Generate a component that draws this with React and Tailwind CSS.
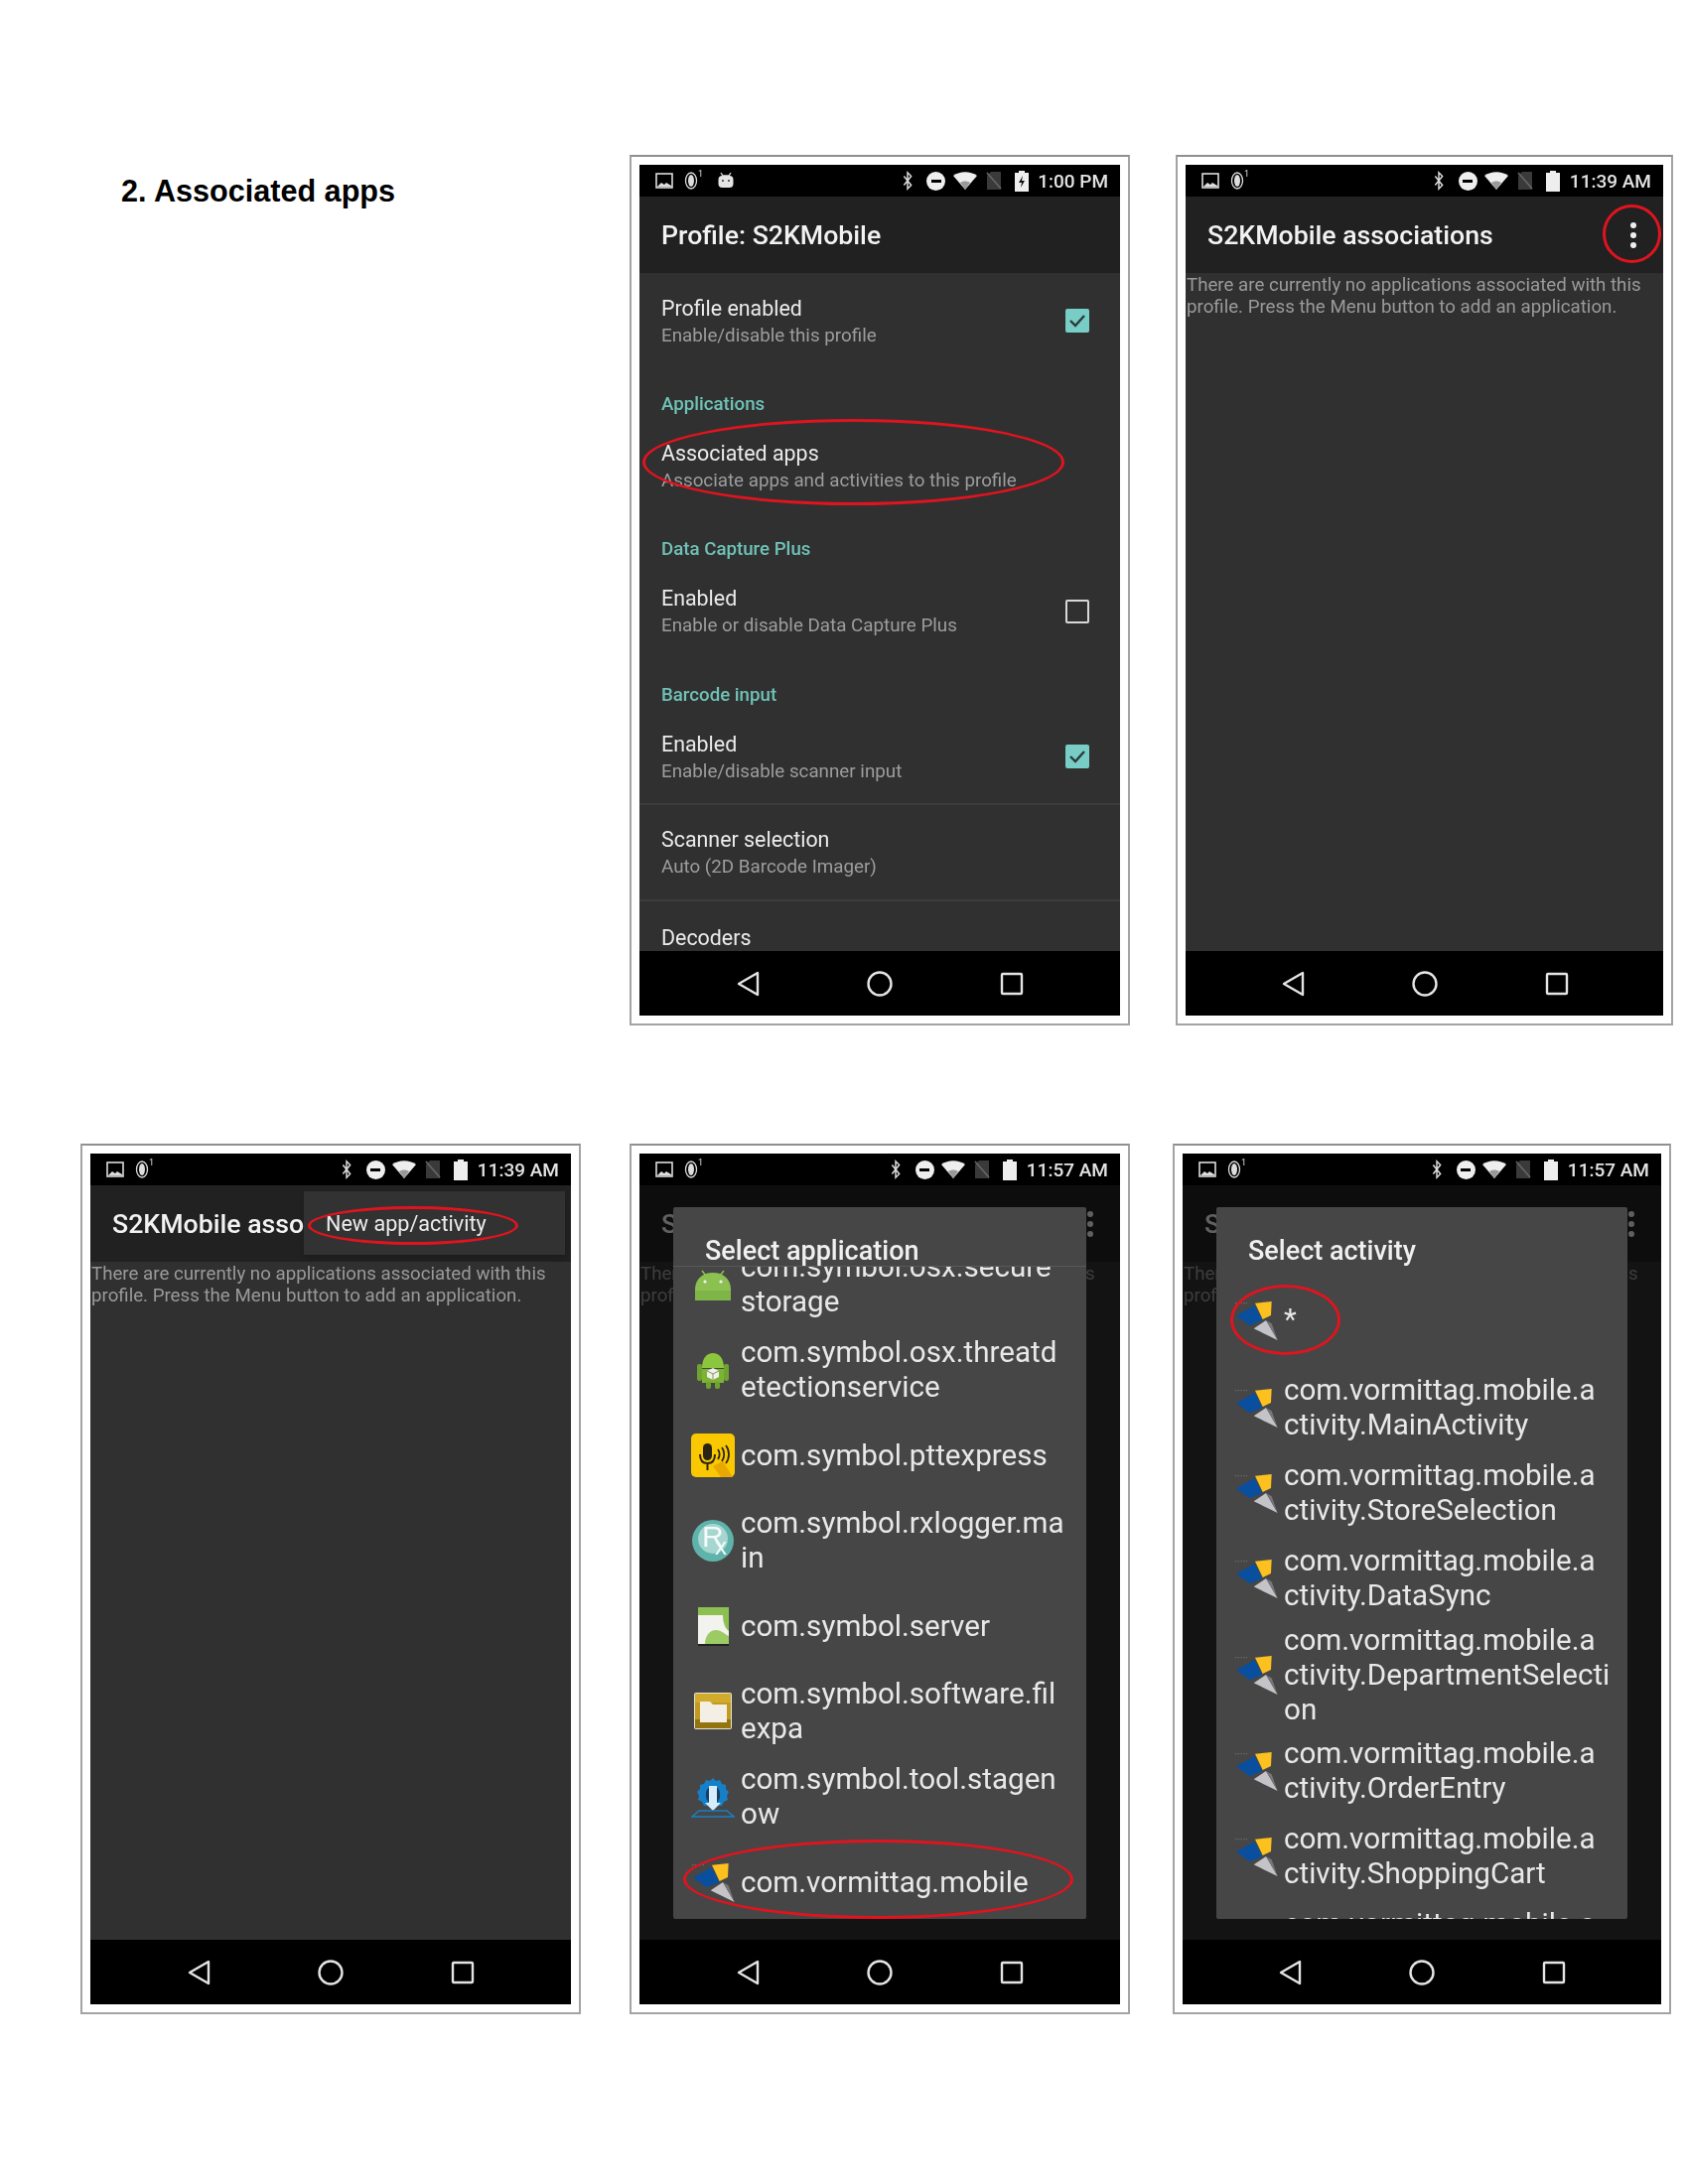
const PROFILE_ROWS = [
  { category: "Applications", title: "Associated apps", sub: "Associate apps and activities to this profile" },
  { category: "Data Capture Plus", title: "Enabled", sub: "Enable or disable Data Capture Plus", check: false },
  { category: "Barcode input", title: "Enabled", sub: "Enable/disable scanner input", check: true },
];

const APPS = [
  { icon: AndroidHead, lines: ["com.symbol.osx.secure", "storage"] },
  { icon: AndroidRobot, lines: ["com.symbol.osx.threatd", "etectionservice"] },
  { icon: PttIcon, lines: ["com.symbol.pttexpress"] },
  { icon: RxIcon, lines: ["com.symbol.rxlogger.ma", "in"] },
  { icon: ServerIcon, lines: ["com.symbol.server"] },
  { icon: FolderIcon, lines: ["com.symbol.software.fil", "expa"] },
  { icon: StageIcon, lines: ["com.symbol.tool.stagen", "ow"] },
  { icon: VormittagIcon, lines: ["com.vormittag.mobile"] },
];

const ACTIVITIES = [
  { lines: ["*"], height: "h-[91px]" },
  { lines: ["com.vormittag.mobile.a", "ctivity.MainActivity"], height: "h-[86px]" },
  { lines: ["com.vormittag.mobile.a", "ctivity.StoreSelection"], height: "h-[86px]" },
  { lines: ["com.vormittag.mobile.a", "ctivity.DataSync"], height: "h-[86px]" },
  { lines: ["com.vormittag.mobile.a", "ctivity.DepartmentSelecti", "on"], height: "h-[108px]" },
  { lines: ["com.vormittag.mobile.a", "ctivity.OrderEntry"], height: "h-[86px]" },
  { lines: ["com.vormittag.mobile.a", "ctivity.ShoppingCart"], height: "h-[86px]" },
  { lines: ["com.vormittag.mobile.a", "ctivity.Login"], height: "h-[86px]" },
];

function AndroidHead() {
  return (
    <svg viewBox="0 0 44 44" className="w-[44px] h-[44px]">
      <path d="M11 8l4 5M33 8l-4 5" stroke="#8bc34a" strokeWidth="1.5" />
      <path d="M4 38V27C4 16 12 10 22 10s18 6 18 17v11z" fill="#8cc152" />
      <rect x="4" y="28" width="36" height="10" fill="#7fb548" />
      <circle cx="14" cy="19" r="1.6" fill="#f2f2f2" />
      <circle cx="30" cy="19" r="1.6" fill="#f2f2f2" />
    </svg>
  );
}

function AndroidRobot() {
  return (
    <svg viewBox="0 0 44 44" className="w-[44px] h-[44px]">
      <path d="M11 20C11 10 16 5 22 5s11 5 11 15z" fill="#8cc63f" />
      <rect x="6" y="16" width="5" height="17" rx="2" fill="#6ea32f" />
      <rect x="33" y="16" width="5" height="17" rx="2" fill="#6ea32f" />
      <rect x="11" y="21" width="22" height="14" fill="#7cb335" />
      <rect x="15" y="34" width="5" height="7" rx="2" fill="#6ea32f" />
      <rect x="24" y="34" width="5" height="7" rx="2" fill="#6ea32f" />
      <path d="M22 20l6 3v6l-6 3-6-3v-6z" fill="#f0f0e8" />
      <path d="M22 26v6M16 23l6 3 6-3" stroke="#7d9a5a" strokeWidth="1" fill="none" />
    </svg>
  );
}

function PttIcon() {
  return (
    <svg viewBox="0 0 44 44" className="w-[44px] h-[44px]">
      <rect width="44" height="44" rx="5" fill="#fac800" />
      <path d="M22 33l8 11h12l-10-16z" fill="#e8a800" />
      <rect x="12" y="10" width="9" height="17" rx="4.5" fill="#2b2413" />
      <path d="M9 21c0 6 3 9 7.5 9s7.5-3 7.5-9M16.500 30v7" stroke="#2b2413" strokeWidth="2" fill="none" />
      <path d="M27 16c2 3 2 7 0 10M31 14c3 4 3 10 0 14M35 12c4 5 4 13 0 18" stroke="#2b2413" strokeWidth="1.8" fill="none" />
    </svg>
  );
}

function RxIcon() {
  return (
    <svg viewBox="0 0 44 44" className="w-[44px] h-[44px]">
      <circle cx="22" cy="22" r="21" fill="#5fb3ab" />
      <circle cx="22" cy="20" r="15" fill="#a6d6d0" />
      <text x="11" y="28" fontSize="30" fill="#f4fbfa" fontFamily="Liberation Sans">R</text>
      <text x="24" y="36" fontSize="24" fill="#f4fbfa" fontFamily="Liberation Sans">x</text>
    </svg>
  );
}

function ServerIcon() {
  return (
    <svg viewBox="0 0 44 44" className="w-[44px] h-[44px]">
      <rect x="7" y="3" width="31" height="37" fill="#f2f2ee" />
      <rect x="7" y="3" width="31" height="8" fill="#8cc152" />
      <path d="M14 40c0-8 5-14 11-14s10 5 13 6v8z" fill="#9ccb63" />
      <path d="M32 11h6v16c-4-3-6-9-6-16z" fill="#8cc152" />
      <rect x="7" y="40" width="31" height="2" fill="#222" />
    </svg>
  );
}

function FolderIcon() {
  return (
    <svg viewBox="0 0 44 44" className="w-[44px] h-[44px]">
      <rect x="3" y="3" width="38" height="37" rx="2" fill="#e8e4d4" />
      <rect x="4" y="4" width="36" height="9" fill="#d2ab2c" />
      <rect x="4" y="13" width="36" height="17" fill="#c39a1f" />
      <rect x="4" y="30" width="36" height="9" fill="#94740f" />
      <path d="M9 12h10l3 3h14v18H9z" fill="#f3efe4" />
    </svg>
  );
}

function StageIcon() {
  return (
    <svg viewBox="0 0 44 44" className="w-[44px] h-[44px]">
      <path d="M22 3l3 3 4-1 2 4 4 1v4l3 3-2 4 1 4-4 2-2 4H13l-2-4-4-2 1-4-2-4 3-3V10l4-1 2-4 4 1z" fill="#1580c8" />
      <rect x="15" y="12" width="14" height="16" rx="6" fill="#173f66" />
      <path d="M18 11h8v17h4l-8 8-8-8h4z" fill="#d5ecfa" />
      <path d="M1 42l7-6h28l7 6z" fill="none" stroke="#1a7fc2" strokeWidth="1.6" />
    </svg>
  );
}

function VormittagIcon() {
  return (
    <svg viewBox="0 0 130 120" className="w-[44px] h-[40px]">
      <path d="M2 8h36" stroke="#6a6a6a" strokeWidth="4" strokeDasharray="4 4" />
      <path d="M5 46L60 15l25 45-40 16z" fill="#0a4f9e" />
      <path d="M62 8l50-5-2 42-25 12z" fill="#fcc11f" />
      <path d="M58 85l37-25 35 60z" fill="#c4c4c8" />
      <path d="M95 60l17 10 18 50z" fill="#77777b" />
    </svg>
  );
}

function StatusBar({ time, robot }) {
  return (
    <div className="h-[32px] bg-black flex items-center pl-[16px] pr-[12px] shrink-0">
      <svg viewBox="0 0 18 16" className="w-[18px] h-[16px]">
        <rect x="1" y="1" width="16" height="14" fill="none" stroke="#ddd" strokeWidth="1.6" />
        <path d="M2 14l4-4 3 2 2-2 5 3v1z" fill="#ddd" />
      </svg>
      <svg viewBox="0 0 14 20" className="w-[14px] h-[20px] ml-[11px]">
        <ellipse cx="7" cy="10" rx="5.500" ry="8" fill="none" stroke="#ddd" strokeWidth="1.300" />
        <ellipse cx="7" cy="10" rx="3" ry="6" fill="#ddd" />
      </svg>
      <span className="text-[9px] leading-none text-[#ddd] mb-[14px]">1</span>
      {robot && (
        <svg viewBox="0 0 18 18" className="w-[18px] h-[18px] ml-[14px]">
          <path d="M4 1l2 3h6l2-3" stroke="#ddd" strokeWidth="1.300" fill="none" />
          <rect x="1.500" y="4" width="15" height="12" rx="4" fill="#e4e4e4" />
          <circle cx="6" cy="9" r="1" fill="#333" />
          <circle cx="12" cy="9" r="1" fill="#333" />
        </svg>
      )}
      <div className="ml-auto flex items-center">
        <div className="w-[29px] flex justify-center">
          <svg viewBox="0 0 14 22" className="w-[14px] h-[20px]">
            <path d="M3 6l8 10-4 4V2l4 4-8 10" fill="none" stroke="#ddd" strokeWidth="1.600" />
          </svg>
        </div>
        <div className="w-[29px] flex justify-center">
          <div className="w-[19px] h-[19px] rounded-full bg-[#eee] flex items-center justify-center">
            <div className="w-[10px] h-[3px] bg-black" />
          </div>
        </div>
        <div className="w-[29px] flex justify-center">
          <svg viewBox="0 0 24 18" className="w-[24px] h-[18px]">
            <path d="M0 4c7-5 17-5 24 0L12 18z" fill="#eee" />
            <path d="M7 11c3-2 7-2 10 0l-5 7z" fill="#999" />
          </svg>
        </div>
        <div className="w-[29px] flex justify-center">
          <svg viewBox="0 0 16 20" className="w-[16px] h-[20px]">
            <path d="M5 1h10v18H1V5z" fill="#3a3a3a" />
            <path d="M1 2l14 16" stroke="#666" strokeWidth="1.600" />
          </svg>
        </div>
        <div className="w-[27px] flex justify-center">
          <svg viewBox="0 0 14 21" className="w-[14px] h-[21px]">
            <path d="M4 2V0h6v2h4v19H0V2z" fill="#eee" />
            {robot && <path d="M8 5l-4 7h3l-1 5 4-7H7z" fill="#111" />}
          </svg>
        </div>
        <span className="ml-[3px] pt-[2px] text-[19px] font-medium text-[#e4e4e4]">{time}</span>
      </div>
    </div>
  );
}

function NavBar() {
  return (
    <div className="h-[65px] bg-black flex items-center justify-center gap-[107px] shrink-0">
      <svg viewBox="0 0 26 26" className="w-[26px] h-[26px]">
        <path d="M23 2v22L4 13z" fill="none" stroke="#e4e4e4" strokeWidth="2.400" strokeLinejoin="round" />
      </svg>
      <svg viewBox="0 0 26 26" className="w-[26px] h-[26px]">
        <circle cx="13" cy="13" r="11.500" fill="none" stroke="#e4e4e4" strokeWidth="2.400" />
      </svg>
      <svg viewBox="0 0 26 26" className="w-[26px] h-[26px]">
        <rect x="3" y="3" width="20" height="20" rx="1" fill="none" stroke="#e4e4e4" strokeWidth="2.400" />
      </svg>
    </div>
  );
}

// red marker drawn over the screenshots
function Ring({ className }) {
  return <div className={`absolute rounded-[50%] border-[3px] border-[#e0141f] ${className}`} />;
}

function Phone({ width, time, robot, children }) {
  return (
    <div className="border-2 border-[#a3a3a3] border-t-[#8f8f8f] bg-white p-2 shrink-0">
      <div className={`relative h-[857px] flex flex-col overflow-hidden bg-[#303030] blur-[0.4px] ${width}`}>
        <StatusBar time={time} robot={robot} />
        <div className="flex-1 min-h-0 flex flex-col overflow-hidden">{children}</div>
        <NavBar />
      </div>
    </div>
  );
}

function Checkbox({ on }) {
  if (on) {
    return (
      <div className="w-[24px] h-[24px] rounded-[2px] bg-[#78cdc6] flex items-center justify-center -mt-[2px]">
        <svg viewBox="0 0 24 24" className="w-[24px] h-[24px]">
          <path d="M5 12l5 5 9-10" fill="none" stroke="#2c3a3a" strokeWidth="2.400" />
        </svg>
      </div>
    );
  }
  return <div className="w-[24px] h-[24px] rounded-[2px] border-2 border-[#d8d8d8] -mt-[2px]" />;
}

function SettingRow({ title, sub, check }) {
  return (
    <div className="h-[76px] pl-[22px] pr-[31px] pt-[2px] flex items-center justify-between shrink-0">
      <div>
        <div className="text-[21.400px] leading-[27px] text-[#ebebeb]">{title}</div>
        <div className="text-[18.800px] leading-[28px] text-[#9d9d9d]">{sub}</div>
      </div>
      {check !== undefined && <Checkbox on={check} />}
    </div>
  );
}

function ProfileScreen() {
  return (
    <>
      <div className="h-[77px] bg-[#212121] pl-[22px] pt-[1px] flex items-center shrink-0">
        <span className="text-[26.700px] font-medium text-[#f2f2f2]">Profile: S2KMobile</span>
      </div>
      <div className="mt-[10px]">
        <SettingRow title="Profile enabled" sub="Enable/disable this profile" check={true} />
      </div>
      {PROFILE_ROWS.map((row) => (
        <div key={row.category} className="pt-[20.400px]">
          <div className="h-[50px] pl-[22px] pt-[1px] flex items-center text-[18.700px] font-medium text-[#6fc2b7]">
            {row.category}
          </div>
          <SettingRow title={row.title} sub={row.sub} check={row.check} />
        </div>
      ))}
      <div className="mt-[9px] h-[101px] border-t-2 border-b-2 border-[#3c3c3c] flex items-center">
        <SettingRow title="Scanner selection" sub="Auto (2D Barcode Imager)" />
      </div>
      <div className="pl-[22px] pt-[23px] text-[21.400px] leading-[27px] text-[#ebebeb]">Decoders</div>
    </>
  );
}

function AssociationsScreen({ title = "S2KMobile associations", dots = true }) {
  return (
    <>
      <div className="h-[77px] bg-[#212121] pl-[22px] pr-[27px] pt-[1px] flex items-center justify-between shrink-0">
        <span className="text-[26.700px] font-medium text-[#f2f2f2]">{title}</span>
        {dots && (
          <div className="flex flex-col gap-[4px]">
            <div className="w-[6px] h-[6px] rounded-full bg-[#eee]" />
            <div className="w-[6px] h-[6px] rounded-full bg-[#eee]" />
            <div className="w-[6px] h-[6px] rounded-full bg-[#eee]" />
          </div>
        )}
      </div>
      <div className="pl-[1px] pt-[1px] text-[18.700px] leading-[22px] text-[#9a9a9a] whitespace-nowrap">
        There are currently no applications associated with this
        <br />
        profile. Press the Menu button to add an application.
      </div>
    </>
  );
}

function ListRow({ icon: Icon, lines, height = "h-[86px]" }) {
  return (
    <div className={`${height} pl-[18px] flex items-center gap-[6px] shrink-0`}>
      <div className="w-[44px] flex justify-center shrink-0">
        <Icon />
      </div>
      <div className="text-[29.600px] leading-[35px] text-[#e8e8e8] whitespace-nowrap">
        {lines.map((l) => (
          <div key={l}>{l}</div>
        ))}
      </div>
    </div>
  );
}

function Dialog({ left, width, children }) {
  return (
    <>
      <div className="absolute left-0 right-0 top-[32px] bottom-[65px] bg-black/60" />
      <div className={`absolute top-[54px] h-[717px] bg-[#464646] flex flex-col overflow-hidden rounded-[2px] ${left} ${width}`}>
        {children}
      </div>
    </>
  );
}

export default function App() {
  return (
    <div className="w-[1700px] h-[2200px] bg-white pt-[156px] font-[Roboto,sans-serif]">
      <div className="flex">
        <h1 className="w-[634px] pl-[122px] pt-[18px] text-[30.600px] leading-[36px] font-bold text-black font-['Liberation_Sans',sans-serif] shrink-0">
          2. Associated apps
        </h1>
        <Phone width="w-[484px]" time="1:00 PM" robot>
          <ProfileScreen />
          <Ring className="left-[3px] top-[256px] w-[425px] h-[87px]" />
        </Phone>
        <div className="ml-[46px]">
          <Phone width="w-[481px]" time="11:39 AM">
            <AssociationsScreen />
            <Ring className="left-[420px] top-[40px] w-[59px] h-[59px]" />
          </Phone>
        </div>
      </div>

      <div className="flex mt-[119px] pl-[81px]">
        <Phone width="w-[484px]" time="11:39 AM">
          <AssociationsScreen dots={false} title="S2KMobile asso" />
          <div className="absolute left-[215px] top-[38px] w-[263px] h-[64px] bg-[#323232] shadow-md flex items-center pl-[22px] pt-[2px] text-[21.600px] text-[#ebebeb]">
            New app/activity
          </div>
          <Ring className="left-[219px] top-[53px] w-[212px] h-[39px]" />
        </Phone>

        <div className="ml-[49px]">
          <Phone width="w-[484px]" time="11:57 AM">
            <AssociationsScreen />
            <Dialog left="left-[34px]" width="w-[416px]">
              <div className="h-[60px] pl-[32px] pt-[27px] text-[27px] leading-[34px] font-medium text-[#f0f0f0] border-b border-[#5a5a5a] shrink-0">
                Select application
              </div>
              <div className="flex-1 min-h-0 overflow-hidden">
                <div className="-mt-[25px]">
                  {APPS.map((app) => (
                    <ListRow key={app.lines[0]} icon={app.icon} lines={app.lines} />
                  ))}
                </div>
              </div>
            </Dialog>
            <Ring className="left-[44px] top-[691px] w-[393px] h-[80px]" />
          </Phone>
        </div>

        <div className="ml-[43px]">
          <Phone width="w-[482px]" time="11:57 AM">
            <AssociationsScreen />
            <Dialog left="left-[34px]" width="w-[414px]">
              <div className="h-[68px] pl-[32px] pt-[27px] text-[27px] leading-[34px] font-medium text-[#f0f0f0] shrink-0">
                Select activity
              </div>
              <div className="flex-1 min-h-0 overflow-hidden">
                {ACTIVITIES.map((a, i) => (
                  <ListRow key={i} icon={VormittagIcon} lines={a.lines} height={a.height} />
                ))}
              </div>
            </Dialog>
            <Ring className="left-[48px] top-[132px] w-[111px] h-[71px]" />
          </Phone>
        </div>
      </div>
    </div>
  );
}
